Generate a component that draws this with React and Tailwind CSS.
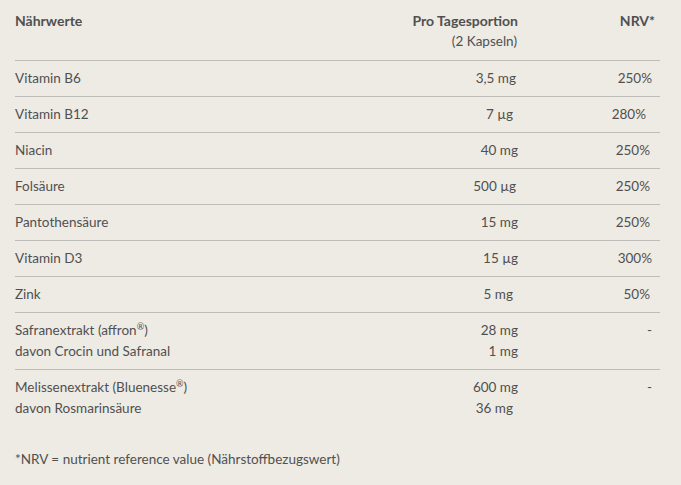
import React from "react";

const rows = [
  { name: ["Vitamin B6"], amt: [["3,5 mg", "pr-[2px]"]], nrv: ["250%", "pr-[8px]"] },
  { name: ["Vitamin B12"], amt: [["7 µg", "pr-[5px]"]], nrv: ["280%", "pr-[14px]"] },
  { name: ["Niacin"], amt: [["40 mg", "pr-0"]], nrv: ["250%", "pr-[10px]"] },
  { name: ["Folsäure"], amt: [["500 µg", "pr-[2px]"]], nrv: ["250%", "pr-[10px]"] },
  { name: ["Pantothensäure"], amt: [["15 mg", "pr-0"]], nrv: ["250%", "pr-[10px]"] },
  { name: ["Vitamin D3"], amt: [["15 µg", "pr-0"]], nrv: ["300%", "pr-[8px]"] },
  { name: ["Zink"], amt: [["5 mg", "pr-[5px]"]], nrv: ["50%", "pr-[10px]"] },
  {
    name: [
      <>Safranextrakt (affron<span className="text-[9px] relative -top-[5px] leading-none">®</span>)</>,
      "davon Crocin und Safranal",
    ],
    amt: [["28 mg", "pr-0"], ["1 mg", "pr-0"]],
    nrv: ["-", "pr-[8px]"],
  },
  {
    name: [
      <>Melissenextrakt (Bluenesse<span className="text-[9px] relative -top-[5px] leading-none">®</span>)</>,
      "davon Rosmarinsäure",
    ],
    amt: [["600 mg", "pr-0"], ["36 mg", "pr-[5px]"]],
    nrv: ["-", "pr-[8px]"],
  },
];

export default function App() {
  return (
    <div
      className="w-[681px] h-[485px] bg-[#eeebe4] text-[#505050] text-[13.5px] leading-[21px] px-[15px] pt-[10px]"
      style={{ fontFamily: "Lato, 'Liberation Sans', sans-serif" }}
    >
      <div className="w-[645px]">
        <div className="flex pb-[8px]">
          <div className="flex-1 font-bold text-[14px]">Nährwerte</div>
          <div className="w-[150px] text-right flex flex-col items-end">
            <span className="font-bold text-[14px]">Pro Tagesportion</span>
            <span className="pr-[1px]">(2 Kapseln)</span>
          </div>
          <div className="w-[142px] text-right font-bold text-[14px] pr-[5px]">NRV*</div>
        </div>
        {rows.map((r, i) => (
          <div key={i} className="flex border-t border-[#bdbcb8] py-[7px]">
            <div className="flex-1 flex flex-col">
              {r.name.map((n, j) => (
                <span key={j}>{n}</span>
              ))}
            </div>
            <div className="w-[150px] flex flex-col items-end">
              {r.amt.map(([a, p], j) => (
                <span key={j} className={p}>{a}</span>
              ))}
            </div>
            <div className={`w-[142px] text-right ${r.nrv[1]}`}>{r.nrv[0]}</div>
          </div>
        ))}
        <div className="mt-[23px]">*NRV = nutrient reference value (Nährstoffbezugswert)</div>
      </div>
    </div>
  );
}
